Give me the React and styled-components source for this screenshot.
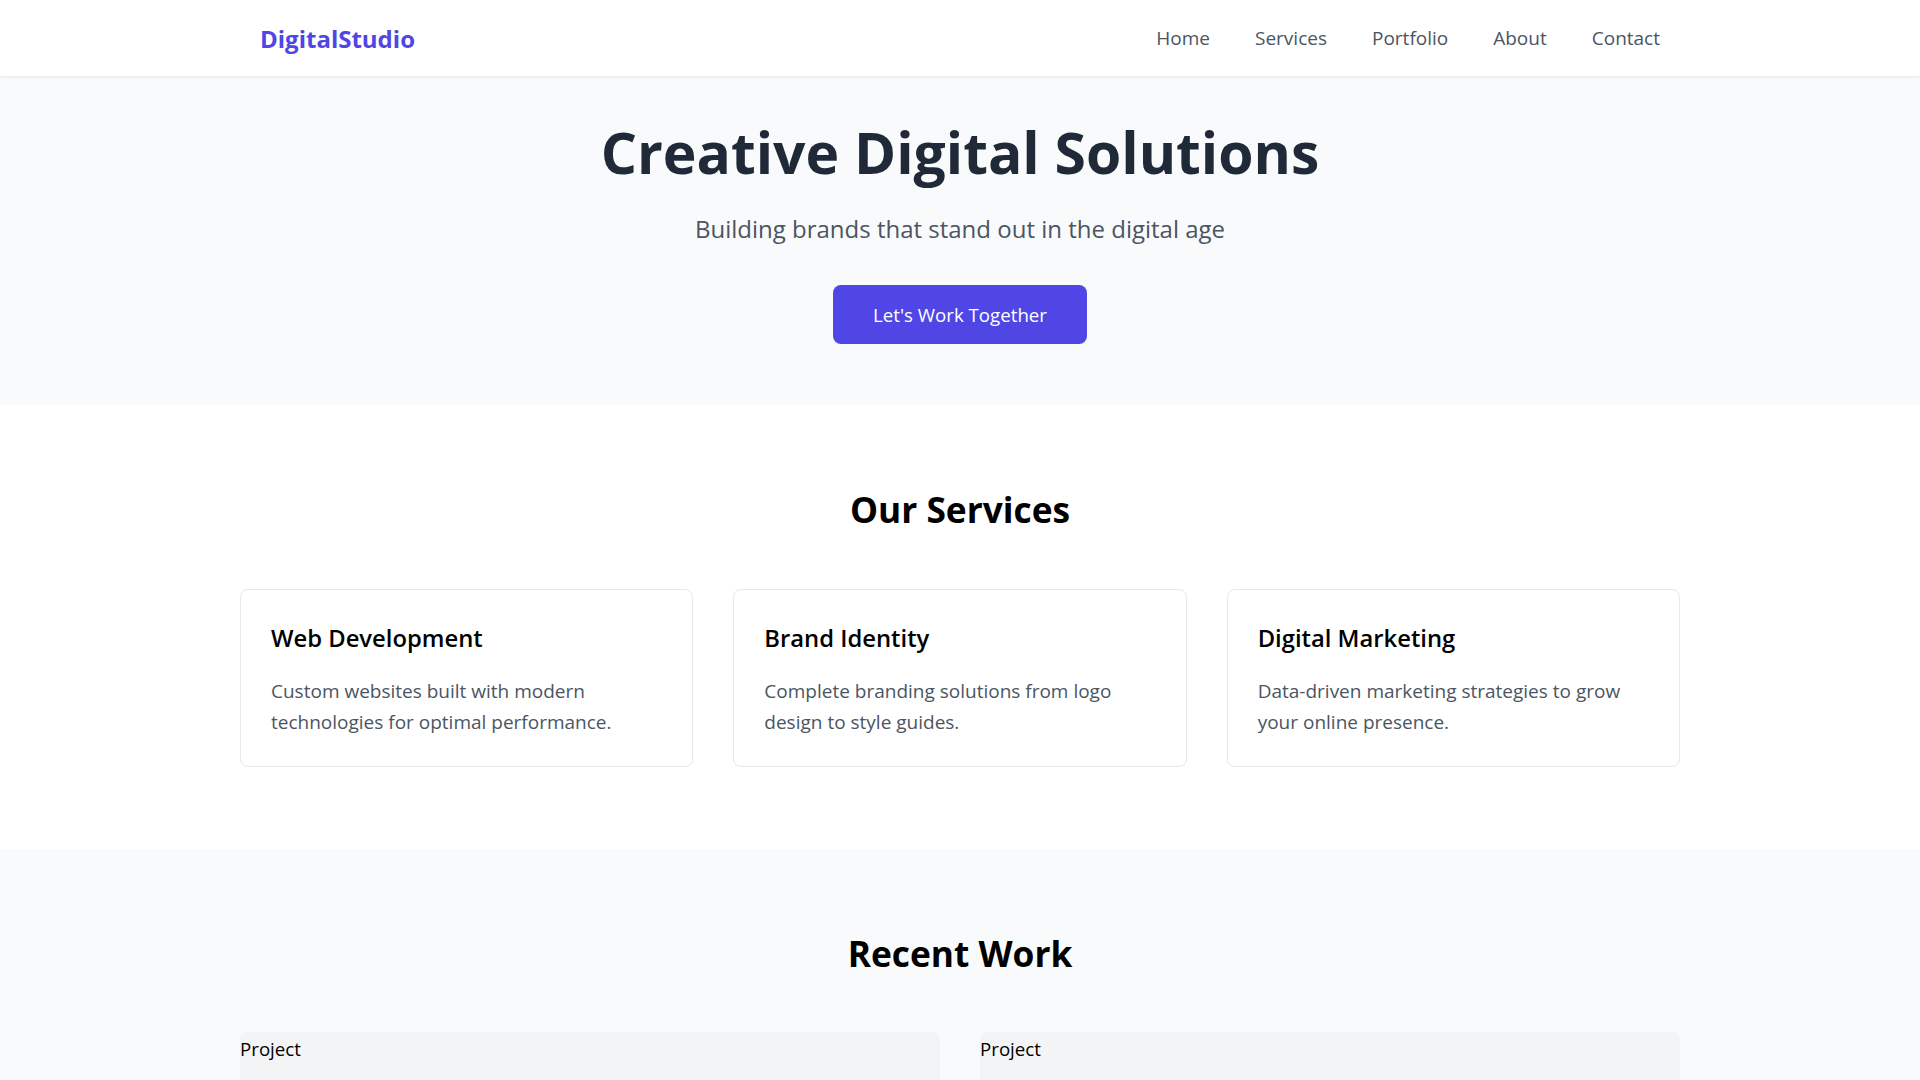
import React from "react"
import styled, { createGlobalStyle } from "styled-components"

const GlobalStyle = createGlobalStyle`
  * {
    box-sizing: border-box;
  }
  body {
    margin: 0;
    font-family: "Open Sans", "Noto Sans", sans-serif;
    color: #000;
    background: #fff;
  }
`;

const NavBar = styled.header`
  position: sticky;
  top: 0;
  z-index: 10;
  background: #fff;
  box-shadow: 0 1px 3px rgba(0, 0, 0, 0.08);
`;

const NavInner = styled.nav`
  max-width: 1400px;
  height: 76px;
  margin: 0 auto;
  display: flex;
  align-items: center;
  justify-content: space-between;
`;

const Logo = styled.a`
  font-size: 24px;
  font-weight: 700;
  color: #4f46e5;
  text-decoration: none;
`;

const NavLinks = styled.ul`
  margin: 0;
  padding: 0;
  list-style: none;
  display: flex;
  gap: 45px;
`;

const NavLink = styled.a`
  font-size: 19px;
  color: #4b5563;
  text-decoration: none;
`;

const Hero = styled.section`
  background: #f9fafb;
  text-align: center;
  padding: 42px 20px 61px;
`;

const HeroTitle = styled.h1`
  margin: 0 0 25px;
  font-size: 57px;
  line-height: 1.2;
  font-weight: 700;
  color: #1f2937;
`;

const HeroText = styled.p`
  margin: 0 0 38px;
  font-size: 24px;
  line-height: 1.5;
  color: #4b5563;
`;

const Button = styled.a`
  display: inline-block;
  padding: 16px 40px;
  font-size: 18.7px;
  line-height: 27px;
  color: #fff;
  background: #4f46e5;
  border-radius: 8px;
  text-decoration: none;
`;

const Section = styled.section`
  padding: 83px 0 82px;
  background: ${(p) => (p.$muted ? "#f9fafb" : "#fff")};
`;

const Container = styled.div`
  width: 75%;
  margin: 0 auto;
`;

const SectionTitle = styled.h2`
  margin: 0 0 58.5px;
  text-align: center;
  font-size: 35.3px;
  line-height: 1.2;
  font-weight: 700;
`;

const Grid = styled.div`
  display: grid;
  grid-template-columns: repeat(${(p) => p.$cols}, 1fr);
  gap: 40px;
`;

const Card = styled.div`
  padding: 33px 30px 28px;
  background: #fff;
  border: 1px solid #e5e7eb;
  border-radius: 8px;
`;

const CardTitle = styled.h3`
  margin: 0 0 22px;
  font-size: 23.8px;
  line-height: 1.3;
  font-weight: 600;
`;

const CardText = styled.p`
  margin: 0;
  font-size: 19px;
  line-height: 30.7px;
  color: #4b5563;
`;

const ProjectCard = styled.div`
  height: 300px;
  padding-top: 4px;
  background: #f3f4f6;
  border-radius: 8px;
  font-size: 18.7px;
  overflow: hidden;
`;

const services = [
  {
    title: "Web Development",
    text: "Custom websites built with modern technologies for optimal performance.",
  },
  {
    title: "Brand Identity",
    text: "Complete branding solutions from logo design to style guides.",
  },
  {
    title: "Digital Marketing",
    text: "Data-driven marketing strategies to grow your online presence.",
  },
];

const links = ["Home", "Services", "Portfolio", "About", "Contact"];

export default function App() {
  return (
    <>
      <GlobalStyle />
      <NavBar>
        <NavInner>
          <Logo href="#">DigitalStudio</Logo>
          <NavLinks>
            {links.map((l) => (
              <li key={l}>
                <NavLink href="#">{l}</NavLink>
              </li>
            ))}
          </NavLinks>
        </NavInner>
      </NavBar>

      <Hero>
        <HeroTitle>Creative Digital Solutions</HeroTitle>
        <HeroText>Building brands that stand out in the digital age</HeroText>
        <Button href="#">Let's Work Together</Button>
      </Hero>

      <Section>
        <Container>
          <SectionTitle>Our Services</SectionTitle>
          <Grid $cols={3}>
            {services.map((s) => (
              <Card key={s.title}>
                <CardTitle>{s.title}</CardTitle>
                <CardText>{s.text}</CardText>
              </Card>
            ))}
          </Grid>
        </Container>
      </Section>

      <Section $muted>
        <Container>
          <SectionTitle>Recent Work</SectionTitle>
          <Grid $cols={2}>
            <ProjectCard>Project</ProjectCard>
            <ProjectCard>Project</ProjectCard>
          </Grid>
        </Container>
      </Section>
    </>
  )
}
